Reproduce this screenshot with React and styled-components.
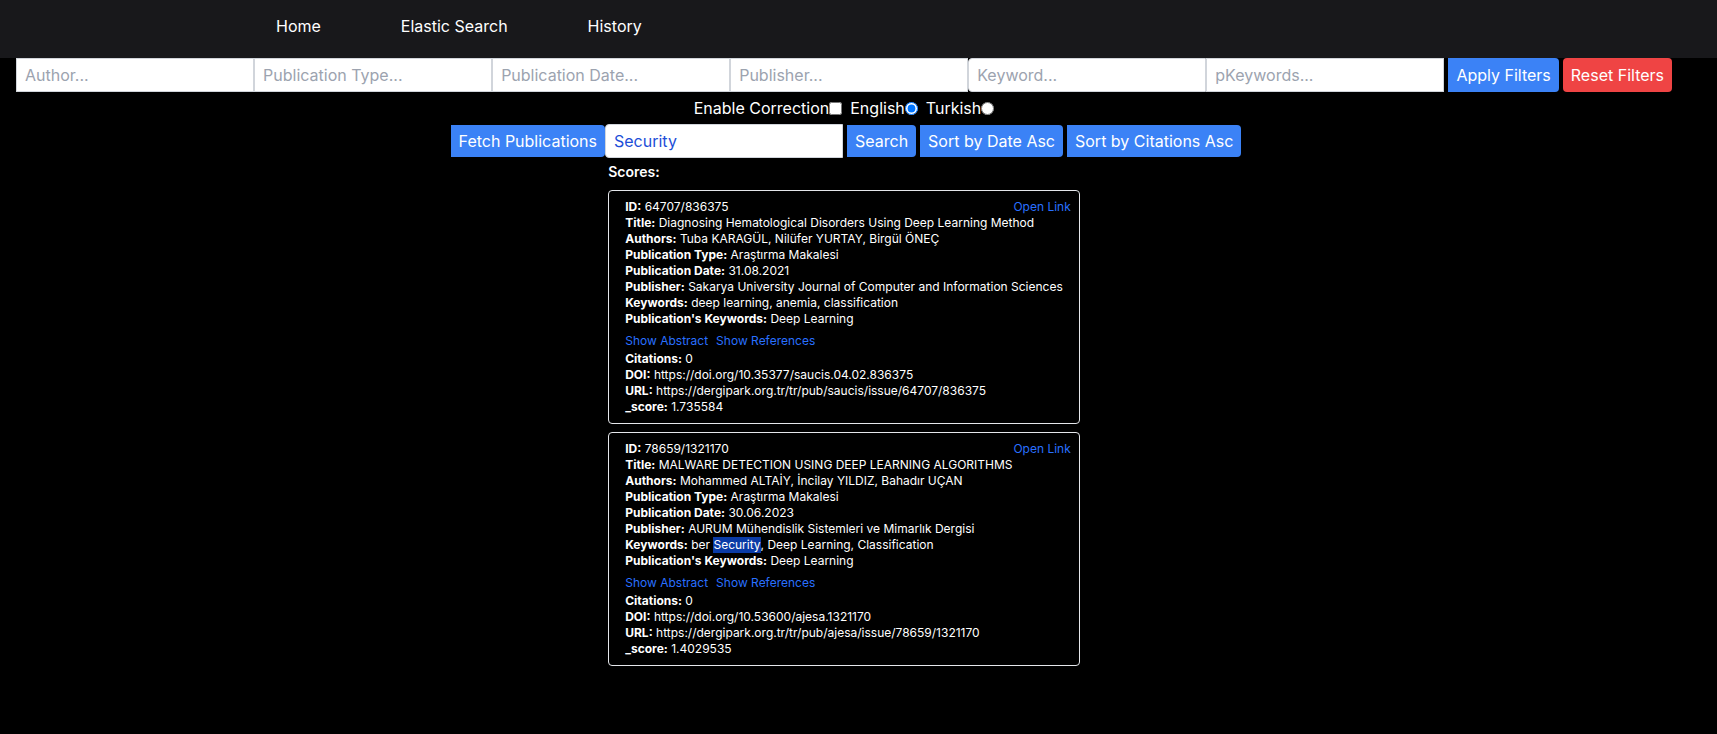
import React, { useState } from "react";
import styled, { createGlobalStyle } from "styled-components";

const GlobalStyle = createGlobalStyle`
  *, *::before, *::after { box-sizing: border-box; }
  body {
    margin: 0;
    background: #000;
    color: #fff;
    font-family: Inter, "Liberation Sans", sans-serif;
    font-size: 16px;
    line-height: 24px;
  }
  button, input { font: inherit; margin: 0; }
  a { text-decoration: none; }
  p { margin: 0; }
`;

const NavBar = styled.nav`
  display: flex;
  gap: 80px;
  padding: 14px 276px 20px;
  background: #18181b;
`;

const NavLink = styled.a`
  color: #fff;
`;

const Main = styled.main`
  display: flex;
  flex-direction: column;
  align-items: center;
  gap: 4px;
  padding: 0 45px 16px 16px;
`;

const FilterBar = styled.form`
  display: flex;
  align-self: stretch;
  gap: 4px;
`;

const FilterFields = styled.div`
  display: flex;
  flex: 1;
  min-width: 0;
`;

const TextField = styled.input`
  min-width: 0;
  height: 34px;
  padding: 4px 8px;
  border: 1px solid #d1d5db;
  border-radius: ${(p) => (p.$rounded ? "4px 0 0 4px" : "0")};
  background: #fff;
  color: #1d4ed8;
  outline: none;
  &::placeholder { color: #9ca3af; opacity: 1; }
`;

const FilterField = styled(TextField)`
  flex: 1;
`;

const SearchField = styled(TextField)`
  width: 238px;
`;

const Button = styled.button`
  padding: 4px 8px;
  border: 0;
  border-radius: ${(p) => (p.$rounded ? "4px" : "0 4px 4px 0")};
  background: ${(p) => (p.$danger ? "#ef4444" : "#3b82f6")};
  color: #fff;
  white-space: nowrap;
  cursor: pointer;
`;

const Options = styled.div`
  display: flex;
  gap: 8px;
`;

const Option = styled.label`
  display: flex;
  align-items: center;

  input {
    width: 13px;
    height: 13px;
  }
`;

const SearchBar = styled.form`
  display: flex;
  align-items: center;
  gap: 4px;
  padding-left: 4px;
`;

const SearchGroup = styled.div`
  display: flex;
  align-items: center;
`;

const Results = styled.section`
  display: flex;
  flex-direction: column;
  gap: 8px;
`;

const ResultsTitle = styled.h2`
  margin: 0;
  font-size: 14px;
  line-height: 20px;
  font-weight: 600;
`;

const Card = styled.article`
  padding: 8px 16px;
  border: 1px solid #e5e7eb;
  border-radius: 4px;
  font-size: 12px;
  line-height: 16px;
`;

const CardTop = styled.div`
  display: flex;
  justify-content: space-between;
  margin-right: -8px;
`;

const CardLink = styled.a`
  color: #2970ff;
`;

const CardActions = styled.div`
  display: flex;
  gap: 8px;
  padding: 6px 0 2px;
`;

const TextButton = styled.button`
  padding: 0;
  border: 0;
  background: none;
  color: #2970ff;
  cursor: pointer;
`;

const FieldName = styled.strong`
  font-weight: 700;
`;

const Highlight = styled.mark`
  display: inline-block;
  background: #0a3ba6;
  color: #fff;
`;

const filters = ["Author", "Publication Type", "Publication Date", "Publisher", "Keyword", "pKeywords"];

const publications = [
  {
    id: "64707/836375",
    details: [
      ["Title", "Diagnosing Hematological Disorders Using Deep Learning Method"],
      ["Authors", "Tuba KARAGÜL, Nilüfer YURTAY, Birgül ÖNEÇ"],
      ["Publication Type", "Araştırma Makalesi"],
      ["Publication Date", "31.08.2021"],
      ["Publisher", "Sakarya University Journal of Computer and Information Sciences"],
      ["Keywords", "deep learning, anemia, classification"],
      ["Publication's Keywords", "Deep Learning"],
    ],
    metrics: [
      ["Citations", "0"],
      ["DOI", "https://doi.org/10.35377/saucis.04.02.836375"],
      ["URL", "https://dergipark.org.tr/tr/pub/saucis/issue/64707/836375"],
      ["_score", "1.735584"],
    ],
  },
  {
    id: "78659/1321170",
    details: [
      ["Title", "MALWARE DETECTION USING DEEP LEARNING ALGORITHMS"],
      ["Authors", "Mohammed ALTAİY, İncilay YILDIZ, Bahadır UÇAN"],
      ["Publication Type", "Araştırma Makalesi"],
      ["Publication Date", "30.06.2023"],
      ["Publisher", "AURUM Mühendislik Sistemleri ve Mimarlık Dergisi"],
      ["Keywords", <>ber <Highlight>Security</Highlight>, Deep Learning, Classification</>],
      ["Publication's Keywords", "Deep Learning"],
    ],
    metrics: [
      ["Citations", "0"],
      ["DOI", "https://doi.org/10.53600/ajesa.1321170"],
      ["URL", "https://dergipark.org.tr/tr/pub/ajesa/issue/78659/1321170"],
      ["_score", "1.4029535"],
    ],
  },
];

function Field({ name, children }) {
  return (
    <p>
      <FieldName>{name}:</FieldName> {children}
    </p>
  );
}

function PublicationCard({ publication }) {
  return (
    <Card>
      <CardTop>
        <Field name="ID">{publication.id}</Field>
        <CardLink href="#publication">Open Link</CardLink>
      </CardTop>
      {publication.details.map(([name, value]) => (
        <Field key={name} name={name}>{value}</Field>
      ))}
      <CardActions>
        <TextButton type="button">Show Abstract</TextButton>
        <TextButton type="button">Show References</TextButton>
      </CardActions>
      {publication.metrics.map(([name, value]) => (
        <Field key={name} name={name}>{value}</Field>
      ))}
    </Card>
  );
}

export default function App() {
  const [query, setQuery] = useState("Security");
  const [language, setLanguage] = useState("English");
  const stay = (event) => event.preventDefault();

  return (
    <>
      <GlobalStyle />
      <NavBar>
        <NavLink href="#home">Home</NavLink>
        <NavLink href="#elastic">Elastic Search</NavLink>
        <NavLink href="#history">History</NavLink>
      </NavBar>
      <Main>
        <FilterBar onSubmit={stay}>
          <FilterFields>
            {filters.map((name) => (
              <FilterField
                key={name}
                type="text"
                aria-label={name}
                placeholder={`${name}...`}
                $rounded={name === "Keyword"}
              />
            ))}
          </FilterFields>
          <Button type="submit">Apply Filters</Button>
          <Button type="reset" $danger $rounded>Reset Filters</Button>
        </FilterBar>
        <Options>
          <Option>Enable Correction<input type="checkbox" /></Option>
          {["English", "Turkish"].map((name) => (
            <Option key={name}>
              {name}
              <input
                type="radio"
                name="language"
                checked={language === name}
                onChange={() => setLanguage(name)}
              />
            </Option>
          ))}
        </Options>
        <SearchBar onSubmit={stay}>
          <SearchGroup>
            <Button type="button">Fetch Publications</Button>
            <SearchField
              type="text"
              aria-label="Search query"
              value={query}
              onChange={(event) => setQuery(event.target.value)}
              $rounded
            />
          </SearchGroup>
          <Button type="submit">Search</Button>
          <Button type="button">Sort by Date Asc</Button>
          <Button type="button">Sort by Citations Asc</Button>
        </SearchBar>
        <Results>
          <ResultsTitle>Scores:</ResultsTitle>
          {publications.map((publication) => (
            <PublicationCard key={publication.id} publication={publication} />
          ))}
        </Results>
      </Main>
    </>
  );
}
